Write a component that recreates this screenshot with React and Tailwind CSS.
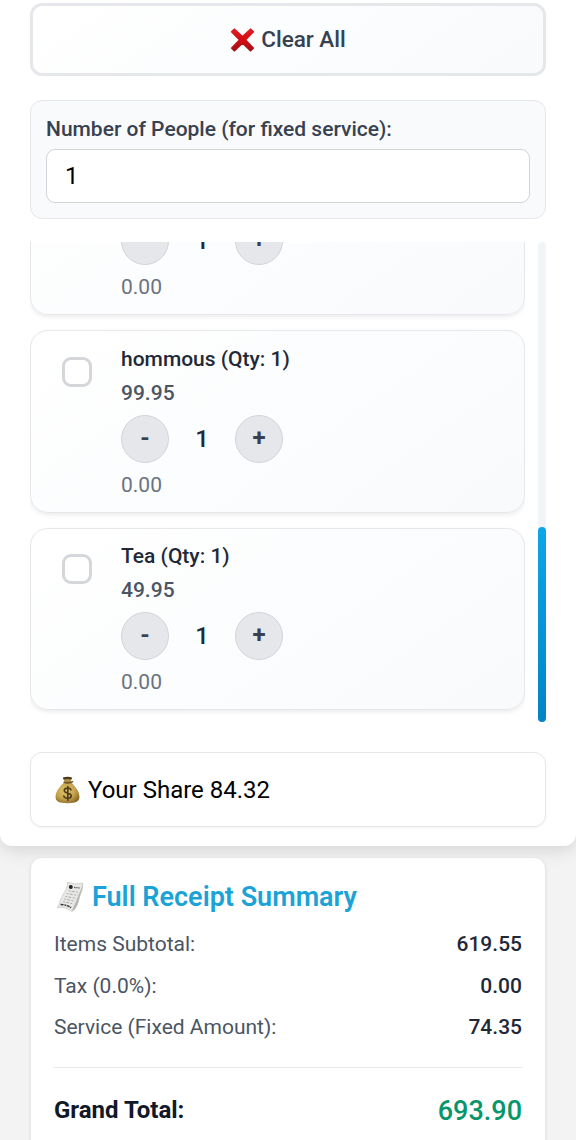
import React from 'react';

function CrossIcon() {
  return (
    <svg width="25" height="26" viewBox="0 0 26 26" className="shrink-0">
      <defs>
        <linearGradient id="cross" x1="0" y1="0" x2="0" y2="1">
          <stop offset="0" stopColor="#e01e22" />
          <stop offset="0.5" stopColor="#d40c12" />
          <stop offset="1" stopColor="#9c1216" />
        </linearGradient>
      </defs>
      <path
        d="M4.6 1.5 13 9.4 21.4 1.5 24.5 4.4 16.3 12.9 24.5 21.4 21.4 24.4 13 16.4 4.6 24.4 1.5 21.4 9.7 12.9 1.5 4.4Z"
        fill="url(#cross)"
        stroke="url(#cross)"
        strokeWidth="1.2"
        strokeLinejoin="round"
      />
    </svg>
  );
}

function MoneyBagIcon() {
  return (
    <svg width="25" height="30" viewBox="0 0 26 30" className="shrink-0">
      <defs>
        <radialGradient id="bag" cx="0.42" cy="0.4" r="0.65">
          <stop offset="0" stopColor="#dfc46c" />
          <stop offset="0.6" stopColor="#c5a44c" />
          <stop offset="1" stopColor="#8d6c2b" />
        </radialGradient>
      </defs>
      <path d="M8.3 2.2Q13 .8 17.6 2.2L15.8 7H10.2Z" fill="#b2934a" />
      <path d="M8 2.2Q13 .3 17.9 2.2L17 4Q13 3 9 4Z" fill="#4d3b20" />
      <path
        d="M9.7 6.8H16.4C19.5 10.5 25.4 15 25.4 22.4 25.4 27.4 21 28.8 13 28.8S.6 27.4 .6 22.4C.6 15 6.6 10.5 9.7 6.8Z"
        fill="url(#bag)"
      />
      <path d="M9.6 7Q13 8.4 18.2 6.4" fill="none" stroke="#70542a" strokeWidth="1.6" strokeLinecap="round" />
      <path
        d="M16.6 14.8C15.7 12.4 9.6 12.4 9.6 15.6 9.6 18.9 16.9 17.5 16.9 21.1 16.9 24.5 9.9 24.3 9.2 21.4M13.3 11.3V25.6"
        fill="none"
        stroke="#4f3c1c"
        strokeWidth="1.7"
        strokeLinecap="round"
      />
    </svg>
  );
}

function ReceiptIcon() {
  return (
    <svg width="28" height="32" viewBox="0 0 28 32" className="shrink-0">
      <path
        d="M11.5 1.2Q19 4 26.8 2.2C27 9 24 13 23 18 21.5 24 20 28 15.8 30.6 12 27.2 6 25.6 1.2 26.8 4 22.5 4.4 18 7 13.6 9.4 9.5 11.7 6.5 11.5 1.2Z"
        fill="#e8e8e6"
        stroke="#c4c4c2"
        strokeWidth="0.7"
      />
      <path d="M26.8 2.2C27 9 24 13 23 18 21.5 24 20 28 15.8 30.6 17.6 25 19.8 22 21.4 17 22.8 12 26 8 26.8 2.2Z" fill="#b5b5b3" />
      <circle cx="14.8" cy="6" r="2" fill="#252525" />
      <path d="M18 6.4 24 7" stroke="#666" strokeWidth="1.2" strokeDasharray="1.6 .5" />
      <path
        d="M12.6 9.8 22.6 11.4M10.8 12.6 21.4 14.4M9.4 15.4 20 17.4M8.2 18 18.6 20.2M7.2 20.6 17.6 23"
        fill="none"
        stroke="#a0a0a0"
        strokeWidth="0.9"
        strokeDasharray="1.8 1.2 3 1.4"
      />
      <path d="M4.6 23.4Q10 23.6 15.2 26.6" fill="none" stroke="#333" strokeWidth="1.5" strokeDasharray="3 .8 2 .6" />
    </svg>
  );
}

function RoundButton({ children }) {
  return (
    <button className="flex h-12 w-12 items-center justify-center rounded-full border border-[#d1d5db] bg-[#e5e7eb] pb-0.5 text-[24px] leading-none font-bold text-[#374151]">
      {children}
    </button>
  );
}

function Stepper() {
  return (
    <>
      <div className="flex items-center">
        <RoundButton>-</RoundButton>
        <div className="w-[66px] text-center text-[24px] leading-7 font-medium text-[#1f2937]">1</div>
        <RoundButton>+</RoundButton>
      </div>
      <div className="mt-2 text-[21px] leading-7 text-[#6b7280]">0.00</div>
    </>
  );
}

function ItemCard({ name, price }) {
  return (
    <div className="flex h-[182.5px] shrink-0 rounded-[18px] border border-[#e5e7eb] bg-linear-145 from-white to-[#f8fafc] pt-[13.5px] pl-[31px] shadow-[0_2px_4px_rgba(0,0,0,0.08)]">
      <div className="mt-3 h-[30px] w-[30px] shrink-0 rounded-[9px] border-3 border-[#d4d6da] bg-white" />
      <div className="ml-[29px] flex flex-col">
        <div className="text-[21px] leading-7 font-medium text-[#1f2937]">{name} (Qty: 1)</div>
        <div className="mt-1.5 mb-2 text-[21px] leading-7 font-medium text-[#4b5563]">{price}</div>
        <Stepper />
      </div>
    </div>
  );
}

function ScrolledCard() {
  return (
    <div className="flex h-[182.5px] shrink-0 flex-col justify-end rounded-[18px] border border-[#e5e7eb] bg-linear-145 from-white to-[#f8fafc] pb-[13px] pl-[90px] shadow-[0_2px_4px_rgba(0,0,0,0.08)]">
      <Stepper />
    </div>
  );
}

function SummaryRow({ label, value }) {
  return (
    <div className="flex h-[41.5px] items-center justify-between text-[21px] leading-7">
      <span className="text-[#4b5563]">{label}</span>
      <span className="font-medium text-[#1f2937]">{value}</span>
    </div>
  );
}

export default function App() {
  return (
    <div className="h-[1140px] w-[576px] overflow-hidden bg-[#f3f3f3] font-['Roboto',sans-serif]">
      <main className="flex h-[846px] flex-col rounded-b-xl bg-white px-[30px] pt-[3px] shadow-[0_4px_18px_rgba(0,0,0,0.13)]">
        <button className="flex h-[73px] shrink-0 items-center justify-center gap-1.5 rounded-xl border-3 border-[#e5e7eb] bg-linear-145 from-white to-[#f8fafc] text-[22.5px] font-medium text-[#374151]">
          <CrossIcon />
          Clear All
        </button>

        <section className="mt-6 h-[119px] shrink-0 rounded-xl border border-[#e5e7eb] bg-[#f9fafb] px-[15px] pt-3.5">
          <label className="block text-[21px] leading-7 font-medium text-[#374151]">
            Number of People (for fixed service):
          </label>
          <input
            type="text"
            defaultValue="1"
            className="mt-1.5 block h-[54px] w-full rounded-[9px] border border-[#d1d5db] bg-white px-[18px] text-[24px] text-black"
          />
        </section>

        <section className="mt-[23px] flex h-[480px] shrink-0 justify-between">
          <div className="flex w-[495px] flex-col justify-end gap-[15px] overflow-hidden pb-3">
            <ScrolledCard />
            <ItemCard name="hommous" price="99.95" />
            <ItemCard name="Tea" price="49.95" />
          </div>
          <div className="flex w-2 flex-col justify-end rounded-full bg-[#f1f5f9]">
            <div className="h-[195px] rounded-full bg-linear-to-b from-[#0ea5e9] to-[#0284c7]" />
          </div>
        </section>

        <section className="mt-[30px] flex h-[75px] shrink-0 items-center gap-2 rounded-xl border border-[#e5e7eb] bg-white pl-6 text-[24px] text-black shadow-[0_1px_3px_rgba(0,0,0,0.05)]">
          <MoneyBagIcon />
          Your Share 84.32
        </section>
      </main>

      <section className="mx-[30px] mt-[11px] h-[320px] rounded-xl border border-[#e5e7eb] bg-white px-[23px] pt-[19px] shadow-[0_2px_4px_rgba(0,0,0,0.06)]">
        <h2 className="flex h-[39px] items-center gap-2 pl-0.5 text-[27px] leading-9 font-semibold text-[#1ba3d8]">
          <ReceiptIcon />
          Full Receipt Summary
        </h2>
        <div className="mt-[7.5px]">
          <SummaryRow label="Items Subtotal:" value="619.55" />
          <SummaryRow label="Tax (0.0%):" value="0.00" />
          <SummaryRow label="Service (Fixed Amount):" value="74.35" />
        </div>
        <div className="mt-[18.5px] flex items-center justify-between border-t border-[#e5e7eb] pt-6">
          <span className="pb-0.5 text-[24px] leading-9 font-bold text-[#111827]">Grand Total:</span>
          <span className="text-[27px] leading-9 font-medium text-[#059669]">693.90</span>
        </div>
      </section>
    </div>
  );
}
